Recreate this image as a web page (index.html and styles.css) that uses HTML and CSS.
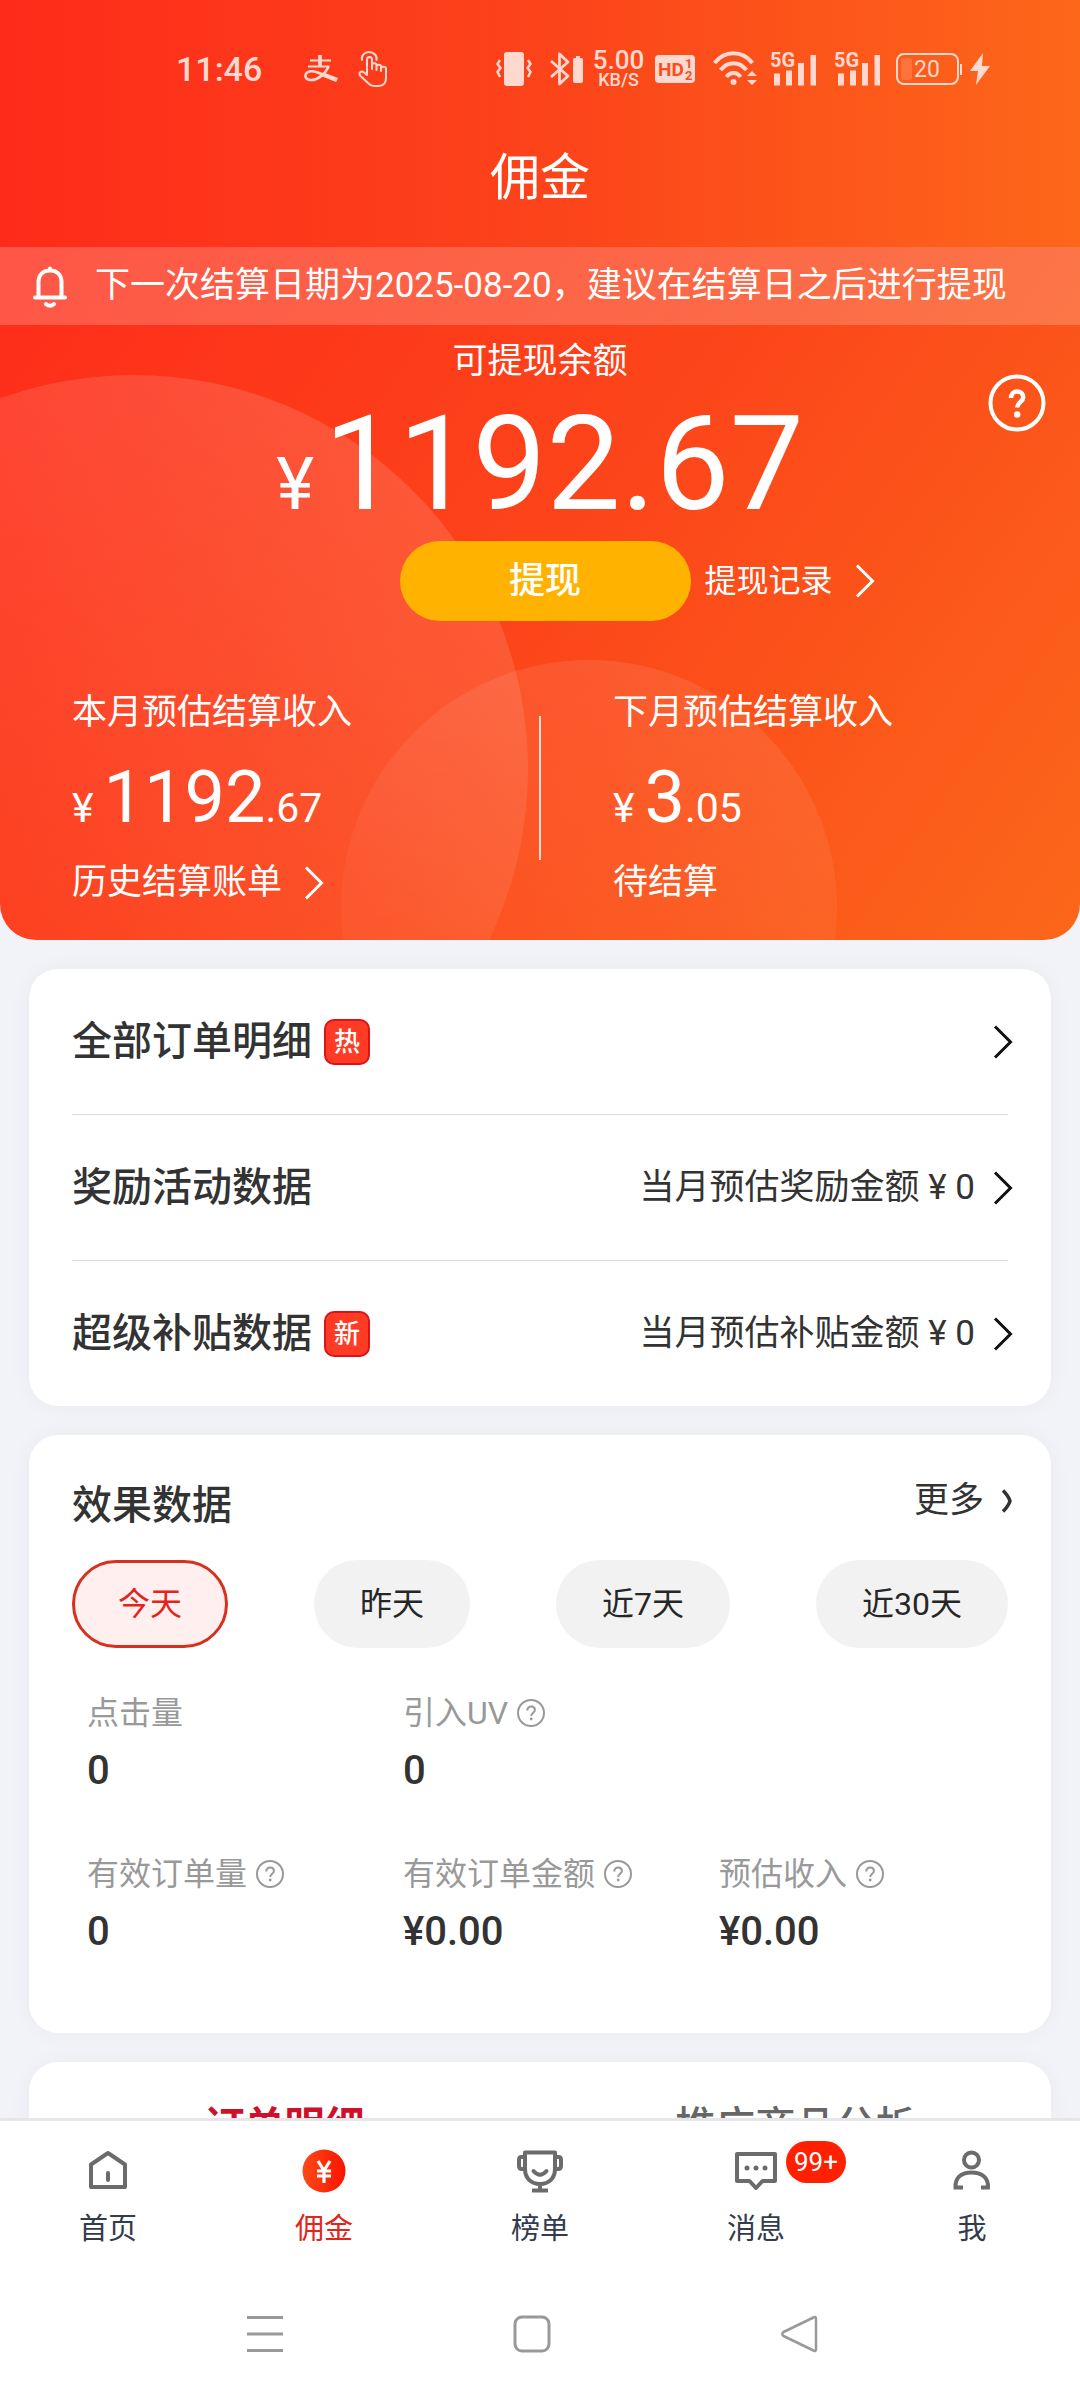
FILE: index.html
```html
<!DOCTYPE html>
<html lang="zh-CN">
<head>
<meta charset="utf-8">
<meta name="viewport" content="width=device-width, initial-scale=1">
<title>佣金</title>
<link rel="stylesheet" href="styles.css">
</head>
<body>
<svg class="defs" aria-hidden="true">
  <symbol id="chevron" viewBox="0 0 20 34"><path d="M2 1.500L17.500 17L2 32.500" fill="none" stroke="currentColor" stroke-width="3"/></symbol>
  <symbol id="help" viewBox="0 0 28 28">
    <circle cx="14" cy="14" r="13" fill="none" stroke="currentColor" stroke-width="2"/>
    <path d="M10.200 11.500c0-2.300 1.600-3.900 3.900-3.900s3.800 1.500 3.800 3.500c0 2.600-3.700 3-3.700 6" fill="none" stroke="currentColor" stroke-width="2"/>
    <circle cx="14.200" cy="20" r="1.400" fill="currentColor"/>
  </symbol>
  <symbol id="bars" viewBox="0 0 47 36">
    <path d="M4 22.500h6v12H4zM16 19.500h6v15h-6zM28 12h6v22.500h-6zM40.500 4h5.500v30.500h-5.500z" fill="currentColor"/>
  </symbol>
</svg>

<div class="app">
  <header class="top">
    <div class="status">
      <span class="clock">11:46</span>
      <svg class="alipay" width="34" height="28" viewBox="0 0 34 28" fill="none" stroke="currentColor">
        <path d="M6 5.500h21M4 11.500h21.500" stroke-width="2.200"/><path d="M16 0v11" stroke-width="3.600"/>
        <path d="M24.500 12C21 19 14 25 7.500 25C2 25 .5 21.500 2 18.800C4 15.500 10 15.500 15 18L33 24.500" stroke-width="2.600"/>
        <path d="M19 19.500L33 25" stroke-width="4.500"/>
      </svg>
      <svg class="hand" width="30" height="36" viewBox="0 0 30 36" fill="none" stroke="currentColor" stroke-width="2" stroke-linejoin="round" stroke-linecap="round">
        <path d="M4 9C3 4.500 6.500 1 11 1s8.500 3.500 7.500 8"/>
        <path d="M9 24V8.500c0-3.500 5-3.500 5 0V18M14 14c0-2.500 4.500-2.500 4.500 0v5M18.500 15.500c0-2.500 4.500-2.500 4.500 0V20M23 17.500c0-2.500 5-2.500 5 0V27c0 5-3 8-7 8h-5c-2.500 0-4-1-5.500-2.500L2.500 25c-3-3 1-6 3.500-3.500L9 24"/>
      </svg>
      <div class="status-right">
        <svg width="44" height="36" viewBox="0 0 44 36">
          <rect x="8" y="1" width="20" height="34" rx="3" fill="currentColor"/>
          <path d="M4 9L1.500 13L4.500 17L1.500 21L4 26M32 9L34.500 13L31.500 17L34.500 21L32 26" fill="none" stroke="currentColor" stroke-width="2.500"/>
        </svg>
        <svg width="33" height="36" viewBox="0 0 33 36">
          <path d="M1 10L18 25L9.500 33V3L18 11L1 26" fill="none" stroke="currentColor" stroke-width="2.800" stroke-linejoin="round"/>
          <path d="M26 5h4v2h1.500q1.500 0 1.500 2v21q0 2-2 2h-6q-2 0-2-2V9q0-2 1.500-2H26z" fill="currentColor"/>
        </svg>
        <span class="speed"><span class="speed-value">5.00</span><span class="speed-unit">KB/S</span></span>
        <svg width="49" height="36" viewBox="0 0 49 36">
          <rect x="1" y="4" width="40" height="28" rx="4" fill="currentColor"/>
          <text x="4" y="25" class="hd-text">HD</text><text x="31" y="17" class="hd-num">1</text><text x="31" y="29" class="hd-num">2</text>
        </svg>
        <svg width="47" height="36" viewBox="0 0 47 36">
          <path d="M1.500 12C12-1 29-1 39.500 12M7.500 19C15 10 26 10 33.500 19M13.500 26C17 20.500 24 20.500 27.500 26" fill="none" stroke="currentColor" stroke-width="4"/>
          <circle cx="20.500" cy="31" r="3" fill="currentColor"/><path d="M34 25l5-5 5 5zM34 29l5 5 5-5z" fill="currentColor"/>
        </svg>
        <svg width="54" height="36" viewBox="0 0 54 36"><text x="0" y="16" class="signal-text">5G</text><use href="#bars" width="47" height="36"/></svg>
        <svg width="52" height="36" viewBox="0 0 52 36"><text x="0" y="16" class="signal-text">5G</text><use href="#bars" width="47" height="36"/></svg>
        <svg width="94" height="36" viewBox="0 0 94 36">
          <rect x="1" y="3" width="61" height="30" rx="7" fill="none" stroke="currentColor" stroke-width="2"/>
          <rect x="5" y="7" width="11" height="22" rx="3" fill="currentColor" opacity=".2"/>
          <path d="M64 13h2v11h-2z" fill="currentColor"/><text x="31" y="26" class="battery-text">20</text>
          <path d="M87 2L74 20h8l-2 14L94 15h-8z" fill="currentColor"/>
        </svg>
      </div>
    </div>
    <h1 class="title">佣金</h1>
  </header>

  <main class="content">
    <section class="hero">
      <svg class="circle circle-large" viewBox="0 0 100 100" aria-hidden="true">
        <defs><linearGradient id="fadeA" x1=".75" y1="0" x2=".25" y2=".9"><stop offset="0" stop-color="#fff" stop-opacity=".14"/><stop offset="1" stop-color="#fff" stop-opacity="0"/></linearGradient></defs>
        <circle cx="50" cy="50" r="50" fill="url(#fadeA)"/>
      </svg>
      <svg class="circle circle-small" viewBox="0 0 100 100" aria-hidden="true">
        <defs><linearGradient id="fadeB" x1=".5" y1="0" x2=".35" y2=".7"><stop offset="0" stop-color="#fff" stop-opacity=".09"/><stop offset="1" stop-color="#fff" stop-opacity=".02"/></linearGradient></defs>
        <circle cx="50" cy="50" r="50" fill="url(#fadeB)"/>
      </svg>

      <div class="notice">
        <svg width="34" height="46" viewBox="0 0 34 46" fill="none" stroke="currentColor" stroke-width="4" stroke-linejoin="round" stroke-linecap="round">
          <path d="M5.500 34V19C5.500 11.500 10.500 7.500 17 7.500S28.500 11.500 28.500 19V34M2 34.500h30M17 5.500v2M13 41q4 3.500 8 0"/>
        </svg>
        <span>下一次结算日期为2025-08-20，建议在结算日之后进行提现</span>
      </div>

      <button class="help-button" type="button" aria-label="帮助">
        <svg width="58" height="58" viewBox="0 0 58 58" fill="none" stroke="currentColor">
          <circle cx="29" cy="29" r="26.500" stroke-width="4"/>
          <path d="M23 24c0-4 2.500-6.500 6.200-6.500s6 2.500 6 5.700c0 4.800-6 5-6 10.300" stroke-width="4.500"/>
          <circle cx="29.200" cy="40.500" r="3.200" fill="currentColor" stroke="none"/>
        </svg>
      </button>

      <p class="balance-label">可提现余额</p>
      <p class="balance"><span class="balance-sign">¥</span><span class="balance-value">1192.67</span></p>
      <div class="actions">
        <button class="withdraw" type="button">提现</button>
        <a class="records" href="#records">提现记录<svg class="chevron"><use href="#chevron"/></svg></a>
      </div>

      <div class="stats">
        <div class="stat">
          <p class="stat-label">本月预估结算收入</p>
          <p class="stat-amount"><span class="minor sign">¥</span><span class="major">1192</span><span class="minor">.67</span></p>
          <a class="stat-label" href="#history">历史结算账单<svg class="chevron"><use href="#chevron"/></svg></a>
        </div>
        <div class="stat-divider"></div>
        <div class="stat">
          <p class="stat-label">下月预估结算收入</p>
          <p class="stat-amount"><span class="minor sign">¥</span><span class="major">3</span><span class="minor">.05</span></p>
          <p class="stat-label">待结算</p>
        </div>
      </div>
    </section>

    <nav class="card list">
      <a class="row" href="#orders"><span class="row-title">全部订单明细</span><span class="tag">热</span><svg class="chevron"><use href="#chevron"/></svg></a>
      <a class="row" href="#rewards"><span class="row-title">奖励活动数据</span><span class="row-value">当月预估奖励金额 ¥ 0</span><svg class="chevron"><use href="#chevron"/></svg></a>
      <a class="row" href="#subsidy"><span class="row-title">超级补贴数据</span><span class="tag">新</span><span class="row-value">当月预估补贴金额 ¥ 0</span><svg class="chevron"><use href="#chevron"/></svg></a>
    </nav>

    <section class="card effect">
      <div class="effect-head">
        <h2 class="row-title">效果数据</h2>
        <a class="more" href="#more">更多<svg width="12" height="24" viewBox="0 0 12 24"><path d="M2 1.500Q7.500 7 9 12Q7.500 17 2 22.500" fill="none" stroke="currentColor" stroke-width="3.500"/></svg></a>
      </div>
      <div class="pills">
        <button class="pill pill-active" type="button">今天</button>
        <button class="pill" type="button">昨天</button>
        <button class="pill" type="button">近7天</button>
        <button class="pill" type="button">近30天</button>
      </div>
      <dl class="metrics">
        <div class="metric"><dt>点击量</dt><dd>0</dd></div>
        <div class="metric metric-wide"><dt>引入UV<svg class="help"><use href="#help"/></svg></dt><dd>0</dd></div>
        <div class="metric"><dt>有效订单量<svg class="help"><use href="#help"/></svg></dt><dd>0</dd></div>
        <div class="metric"><dt>有效订单金额<svg class="help"><use href="#help"/></svg></dt><dd>¥0.00</dd></div>
        <div class="metric"><dt>预估收入<svg class="help"><use href="#help"/></svg></dt><dd>¥0.00</dd></div>
      </dl>
    </section>

    <section class="card details">
      <button class="detail-tab detail-tab-active" type="button">订单明细</button>
      <button class="detail-tab" type="button">推广商品分析</button>
    </section>
  </main>

  <footer class="bottom">
    <nav class="tabs">
      <a class="tab" href="#home">
        <span class="tab-icon"><svg width="44" height="44" viewBox="0 0 44 44" fill="none" stroke="currentColor" stroke-width="4" stroke-linejoin="round"><path d="M5 15.500L22 4l17 11.500V38H5z"/><path d="M22 24v7" stroke-linecap="round"/></svg></span>
        首页
      </a>
      <a class="tab tab-active" href="#commission">
        <span class="tab-icon"><svg width="44" height="44" viewBox="0 0 44 44"><defs><linearGradient id="coin"><stop offset="0" stop-color="#fd4a18"/><stop offset="1" stop-color="#f91400"/></linearGradient></defs><circle cx="22" cy="22" r="21.500" fill="url(#coin)"/><path d="M16 12l6 9.500L28 12M15 22h14M15 27h14M22 21.500V34" fill="none" stroke="#fff" stroke-width="3.200"/></svg></span>
        佣金
      </a>
      <a class="tab" href="#ranking">
        <span class="tab-icon"><svg width="46" height="44" viewBox="0 0 46 44" fill="none" stroke="currentColor" stroke-width="4" stroke-linejoin="round"><path d="M8 3.500h30V20c0 9-6 15-15 15S8 29 8 20zM8 8H4.500Q2 8 2 11v6q0 3 3 3h3M38 8h3.500q2.500 0 2.500 3v6q0 3-3 3h-3M23 35v6M15 41.500h16"/><path d="M16.500 22q6.500 7.500 13 0" stroke-linecap="round"/></svg></span>
        榜单
      </a>
      <a class="tab" href="#messages">
        <span class="tab-icon"><svg width="44" height="44" viewBox="0 0 44 44"><path d="M3 5h38v27H28.500L22 39l-6.500-7H3z" fill="none" stroke="currentColor" stroke-width="4" stroke-linejoin="round"/><path d="M10.500 19a2.500 2.500 0 1 0 5 0a2.500 2.500 0 1 0-5 0M19.500 19a2.500 2.500 0 1 0 5 0a2.500 2.500 0 1 0-5 0M28.500 19a2.500 2.500 0 1 0 5 0a2.500 2.500 0 1 0-5 0" fill="currentColor"/></svg><span class="count">99+</span></span>
        消息
      </a>
      <a class="tab" href="#me">
        <span class="tab-icon"><svg width="44" height="44" viewBox="0 0 44 44" fill="none" stroke="currentColor" stroke-width="4"><circle cx="21.500" cy="11" r="7.500"/><path d="M13 38.500H5.500C5 28 12 23.500 21.500 23.500S38.500 28 38 38.500H31"/></svg></span>
        我
      </a>
    </nav>
    <div class="system">
      <button type="button" aria-label="菜单"><svg width="38" height="38" viewBox="0 0 38 38" stroke="currentColor" stroke-width="3"><path d="M1 2.500h36M1 19h36M1 35.500h36"/></svg></button>
      <button type="button" aria-label="主屏幕"><svg width="38" height="38" viewBox="0 0 38 38"><rect x="2" y="2" width="34" height="34" rx="7" fill="none" stroke="currentColor" stroke-width="3"/></svg></button>
      <button type="button" aria-label="返回"><svg width="38" height="38" viewBox="0 0 38 38"><path d="M33.500 2.500Q36 1 36 4v30q0 3-2.500 1.500L3.500 21Q1 19 3.500 17z" fill="none" stroke="currentColor" stroke-width="2.500" stroke-linejoin="round"/></svg></button>
    </div>
  </footer>
</div>
</body>
</html>
```

FILE: styles.css
```css
:root {
  --gutter: 29px;
  --text: #333;
  --muted: #999;
  --red: #e1251b;
}

* { box-sizing: border-box; }

body,
h1,
h2,
p,
dl,
dd { margin: 0; }

body {
  background: #f1f3f8;
  color: var(--text);
  font-family: Roboto, "Noto Sans CJK SC", sans-serif;
  font-size: 35px;
  line-height: 50px;
}

a { color: inherit; text-decoration: none; }

button {
  padding: 0;
  border: 0;
  background: none;
  color: inherit;
  font: inherit;
}

svg { display: block; flex: none; }

.defs { position: absolute; width: 0; height: 0; }

.app {
  display: flex;
  flex-direction: column;
  height: 100vh;
}

/* header */
.top {
  flex: none;
  padding-bottom: 29px;
  background: linear-gradient(90deg, #fe2b1a, #fc431a 50%, #fd671a);
  color: #fff;
}

.status {
  display: flex;
  align-items: center;
  height: 138px;
  padding: 0 90px 0 176px;
  color: #ffd9cf;
}

.clock { font-size: 34px; font-weight: 500; }
.alipay { margin-left: 42px; }
.hand { margin-left: 20px; }

.status-right {
  display: flex;
  align-items: center;
  gap: 10px;
  margin-left: auto;
}

.speed {
  display: flex;
  flex-direction: column;
  align-items: center;
  width: 51px;
  font-weight: 500;
}

.speed-value { font-size: 26px; line-height: 22px; }
.speed-unit { font-size: 18px; line-height: 18px; }

.signal-text { font: 700 20px Roboto, sans-serif; fill: currentColor; }
.hd-text { font: 700 19px Roboto, sans-serif; fill: #fc4d1b; }
.hd-num { font: 700 13px Roboto, sans-serif; fill: #fc4d1b; }
.battery-text { font: 400 23px Roboto, sans-serif; fill: currentColor; text-anchor: middle; }

.title {
  font-size: 50px;
  font-weight: 400;
  line-height: 80px;
  text-align: center;
}

.content {
  flex: 1;
  min-height: 0;
  overflow: hidden;
}

/* balance panel */
.hero {
  position: relative;
  overflow: hidden;
  padding-bottom: 32px;
  border-radius: 0 0 36px 36px;
  background: linear-gradient(125deg, #fe2c1a, #fc451a 50%, #fb671a);
  color: #fff;
}

.hero > * { position: relative; }

.hero > .circle { position: absolute; }

.circle-large { left: -260px; top: 128px; width: 788px; height: 788px; }
.circle-small { left: 341px; top: 413px; width: 496px; height: 496px; }

.notice {
  display: flex;
  align-items: center;
  gap: 28px;
  height: 78px;
  padding-left: 33px;
  background: rgba(255, 255, 255, .2);
  white-space: nowrap;
}

.hero > .help-button {
  position: absolute;
  top: 127px;
  right: 34px;
}

.balance-label {
  padding-top: 12px;
  text-align: center;
}

.balance {
  display: flex;
  justify-content: center;
  align-items: baseline;
  gap: 10px;
}

.balance-sign { font-size: 72px; line-height: 72px; }
.balance-value { font-size: 132px; line-height: 154px; }

.actions {
  display: flex;
  align-items: center;
  gap: 14px;
  padding-left: 37%;
}

.withdraw {
  width: 291px;
  height: 80px;
  border-radius: 40px;
  background: #ffb300;
  font-size: 36px;
  font-weight: 500;
}

.chevron { width: 20px; height: 34px; }

.records {
  display: flex;
  align-items: center;
  gap: 22px;
  font-size: 32px;
}

.stats {
  display: grid;
  grid-template-columns: 1fr 2px 1fr;
  margin-top: 67px;
}

.stat {
  display: flex;
  flex-direction: column;
  gap: 18px;
  padding-left: 72px;
}

.stat-label {
  display: flex;
  align-items: center;
  gap: 22px;
}

.stat-divider {
  height: 144px;
  margin-top: 28px;
  background: rgba(255, 255, 255, .8);
}

.stat-amount {
  display: flex;
  align-items: baseline;
}

.major { font-size: 72px; line-height: 84px; }
.minor { font-size: 41px; line-height: 41px; }
.sign { margin-right: 10px; }

/* cards */
.card {
  margin: var(--gutter) var(--gutter) 0;
  border-radius: 29px;
  background: #fff;
  box-shadow: 0 0 24px rgba(0, 0, 0, .04);
}

.list { padding: 0 43px; }

.row {
  display: flex;
  align-items: center;
  height: 146px;
  border-bottom: 1px solid #ddd;
}

.row:last-child { height: 145px; border-bottom: 0; }

.row-title {
  font-size: 40px;
  font-weight: 500;
  line-height: 56px;
}

.tag {
  width: 46px;
  height: 46px;
  margin-left: 12px;
  border: 2px solid #d9141a;
  border-radius: 10px;
  background: #ff3b26;
  color: #fff;
  font-size: 26px;
  font-weight: 500;
  line-height: 42px;
  text-align: center;
}

.row .chevron {
  margin: 0 -5px 0 auto;
  color: #111;
}

.row-value { margin-left: auto; }
.row-value + .chevron { margin-left: 18px; }

.effect { padding: 43px 0 73px; }

.effect-head {
  display: flex;
  justify-content: space-between;
  align-items: flex-start;
  padding: 0 38px 0 43px;
}

.more {
  display: flex;
  align-items: center;
  gap: 17px;
  line-height: 46px;
}

.pills {
  display: flex;
  justify-content: space-between;
  margin-top: 26px;
  padding: 0 43px;
}

.pill {
  height: 88px;
  padding: 0 46px;
  border-radius: 44px;
  background: #f2f2f2;
  color: #262626;
  font-size: 32px;
}

.pill-active {
  padding: 0 43px;
  border: 3px solid #d6301f;
  background: #ffefef;
  color: var(--red);
}

.metrics {
  display: grid;
  grid-template-columns: repeat(3, 1fr);
  row-gap: 51px;
  margin-top: 41px;
  padding: 0 16px 0 58px;
}

.metric-wide { grid-column: span 2; }

.metric dt {
  display: flex;
  align-items: center;
  gap: 9px;
  color: var(--muted);
  font-size: 32px;
  line-height: 48px;
}

.help { width: 28px; height: 28px; }

.metric dd {
  margin-top: 6px;
  font-size: 40px;
  font-weight: 500;
  line-height: 56px;
}

.details {
  display: grid;
  grid-template-columns: 1fr 1fr;
}

.detail-tab {
  height: 130px;
  color: #666;
  font-size: 40px;
  font-weight: 500;
}

.detail-tab-active { color: #d0102b; font-weight: 700; }

/* bottom navigation */
.bottom {
  flex: none;
  border-top: 3px solid #e6e6e8;
  background: #fff;
}

.tabs {
  display: grid;
  grid-template-columns: repeat(5, 1fr);
  padding-top: 28px;
}

.tab {
  display: flex;
  flex-direction: column;
  align-items: center;
  gap: 16px;
  color: #333b4d;
  font-size: 29px;
  line-height: 40px;
}

.tab-active { color: var(--red); }

.tab-icon { position: relative; color: #6b6b6b; }

.count {
  position: absolute;
  left: 52px;
  top: -8px;
  width: 60px;
  height: 42px;
  border-radius: 21px;
  background: #ff2000;
  color: #fff;
  font-size: 26px;
  line-height: 42px;
  text-align: center;
}

.system {
  display: grid;
  grid-template-columns: repeat(3, 1fr);
  justify-items: center;
  margin-top: 66px;
  padding: 0 147px 47px 131px;
  color: #999;
}
```
